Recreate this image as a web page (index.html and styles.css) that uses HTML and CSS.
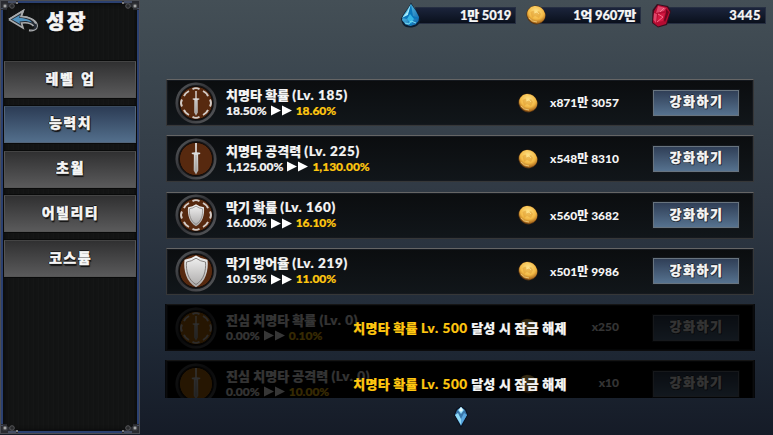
FILE: index.html
```html
<!DOCTYPE html>
<html lang="ko">
<head>
<meta charset="utf-8">
<title>성장</title>
<link rel="stylesheet" href="styles.css">
</head>
<body>
<svg class="defs" width="0" height="0" aria-hidden="true">
  <defs>
    <linearGradient id="ring" x1="0" y1="0" x2="1" y2="1"><stop offset="0" stop-color="#55585b"/><stop offset=".45" stop-color="#303135"/><stop offset="1" stop-color="#595b5e"/></linearGradient>
    <linearGradient id="silver" x1="0" y1="0" x2="0" y2="1"><stop offset="0" stop-color="#f4f4f4"/><stop offset="1" stop-color="#aaa8a7"/></linearGradient>
    <radialGradient id="gold" cx=".4" cy=".35" r=".65"><stop offset="0" stop-color="#ffe388"/><stop offset=".65" stop-color="#f3b945"/><stop offset="1" stop-color="#a9671b"/></radialGradient>
    <linearGradient id="blue" x1="0" y1="0" x2="1" y2="1"><stop offset="0" stop-color="#6ed9f5"/><stop offset="1" stop-color="#055ba5"/></linearGradient>
    <symbol id="disc" viewBox="0 0 42 42">
      <circle cx="21" cy="21" r="20.800" fill="#17181b"/>
      <circle cx="21" cy="21" r="19.200" fill="none" stroke="url(#ring)" stroke-width="2.600"/>
      <circle cx="21" cy="21" r="16.600" fill="currentColor" stroke="#110b08" stroke-width="1"/>
    </symbol>
    <symbol id="dashes" viewBox="0 0 42 42">
      <g fill="none" stroke="#d3cbc6" stroke-width="1.900">
        <path d="M17.500 7.200Q21 5 24.500 7.200M28 9Q32 11 33 14.200M35 17.500Q37 21 35 24.500M33 27.800Q31.800 31 28 33M24.500 34.800Q21 37 17.500 34.800M14 33Q10 31 9 27.800M7 24.500Q5 21 7 17.500M9 14.200Q10.200 11 14 9"/>
      </g>
    </symbol>
    <symbol id="sword" viewBox="0 0 42 42">
      <path d="M20.200 5h1.600v9.200l3.400.5v1.200l-2.100.7.200 16-2.300 4-2.300-4 .2-16-2.100-.7v-1.200l3.400-.5z" fill="url(#silver)"/>
      <path d="M21 17v16" stroke="#8f8985" stroke-width=".6"/>
    </symbol>
    <symbol id="shield" viewBox="0 0 42 42">
      <path d="M21 5.500Q26 9 32.500 9.700C33.800 20.500 30.500 32 21 37.300 11.500 32 8.200 20.500 9.500 9.700Q16 9 21 5.500z" fill="url(#silver)"/>
      <path d="M21 8.200Q25.500 11.400 30.500 12C31.200 21 28.800 30 21 34.500 13.200 30 10.800 21 11.500 12Q16.500 11.400 21 8.200z" fill="none" stroke="#6c6663" stroke-width=".8"/>
    </symbol>
    <symbol id="coin" viewBox="0 0 20 20">
      <ellipse cx="10" cy="10" rx="9.800" ry="9.200" transform="rotate(35 10 10)" fill="#593713"/>
      <ellipse cx="10" cy="9.700" rx="9.300" ry="8.600" transform="rotate(35 10 10)" fill="url(#gold)"/>
      <path d="M4.500 7l3-1.500L9 8l4-2 2 3-2 4-4-2-3 2z" fill="#d88e24" opacity=".4"/>
      <path d="M8 8l3-1 2 2M3 13q3 4 8 4" fill="none" stroke="#ffe89b" stroke-width=".8" opacity=".8"/>
    </symbol>
    <symbol id="corner" viewBox="0 0 18 10">
      <path d="M0 0h17v3h-5v3H6v3H0z" fill="#292a30"/>
      <path d="M7 1h8M1 8V7" stroke="#637298" stroke-width="1"/>
      <circle cx="4" cy="5" r="2.600" fill="#66676a" stroke="#303135"/><circle cx="4" cy="5" r="1" fill="#bbb"/>
      <circle cx="11" cy="5" r="2.300" fill="#292a2c" stroke="#555659"/>
      <path d="M15 2h2M16 1v2" stroke="#999" stroke-width="1"/>
    </symbol>
  </defs>
</svg>
<div class="screen">
  <aside class="sidebar">
    <svg class="corner tl"><use href="#corner"/></svg><svg class="corner tr"><use href="#corner"/></svg>
    <svg class="corner bl"><use href="#corner"/></svg><svg class="corner br"><use href="#corner"/></svg>
    <header class="heading">
      <svg class="back" viewBox="0 0 32 24"><path d="M2 10.500L16 2l-2 5.500C23 8 30 12 30 17c0 3-4 5-8 4.300" fill="none" stroke="#a9abad" stroke-width="2"/><path d="M2 10.500L16 19l-1.500-5C22 13 28 16 27 19q-1 2-5 2.300 8 0 8-4.300C30 12 23 8 14 7.500L16 2z" fill="#252b34"/><path d="M2 10.500L16 2l-2 5.500C21 8 27 10.500 29 14.500M2 10.500L16 19l-1.500-5c5-.7 10 .5 12 3" fill="none" stroke="#a9abad" stroke-width="1.700"/><path d="M5 10.500l8-4.500-.8 3C18 9 23 10.500 25 13.500c-4-1.800-8-2-12.500-1l.7 2.500z" fill="#4f91bd"/></svg>
      <h1>성장</h1>
    </header>
    <nav class="menu">
      <button class="tab">레벨 업</button>
      <button class="tab active">능력치</button>
      <button class="tab">초월</button>
      <button class="tab">어빌리티</button>
      <button class="tab">코스튬</button>
    </nav>
  </aside>
  <main class="main">
    <div class="wallet">
      <div class="balance"><svg class="gem" viewBox="0 0 24 26"><path d="M12 .5C14 5 21 12 21.500 18 20 23.500 17 25.500 11 25.500S3 22 2 17C4 11 10 6 12 .5z" fill="#0c1e32"/><path d="M12 2l5 7 3 6-.5 4-3 3.500-5 1.500-5-1.500L3 18l1-4 4-6z" fill="url(#blue)"/><path d="M12 2L9 13l-6 3 5-6z" fill="#a3e9fa"/><path d="M12 2l2 12 6 2-5 1-3 7-4-7-5-1 6-3z" fill="#0a77bb"/><path d="M8 17l3-5 4 5-3 5z" fill="#35b4e4"/><path d="M6 21l4 1 2-3 5 2" fill="none" stroke="#76dcf3" stroke-width="1"/></svg>1만 5019</div>
      <div class="balance"><svg class="gem cash"><use href="#coin"/></svg>1억 9607만</div>
      <div class="balance"><svg class="gem" viewBox="0 0 24 26"><path d="M8 2l11 2 3 5-4 14-9 2.500-6-4.500L3.500 8z" fill="#35101f"/><path d="M9 3l9 2 3 5-4 12-8 2.500-5-4L5 9z" fill="#b50c32"/><path d="M9 4l8 2-2 3-8 2zM8 12l-1 9-2.500-3L5 11z" fill="#e0456a"/><path d="M9 12l7-1-2 8-6 1z" fill="#d51942"/><path d="M17 7l3 3-4 10-1-2 2-7z" fill="#71051f"/><path d="M9 12l5 3-6 5M15 6l-4 4" fill="none" stroke="#ff849b" stroke-width=".8"/></svg>3445</div>
    </div>
    <section class="list">
      <article class="row">
        <svg class="skill"><use href="#disc"/><use href="#dashes"/><use href="#sword" x="4.500" y="5" width="33" height="33"/></svg>
        <div class="info"><h2>치명타 확률 <span class="level">(Lv. 185)</span></h2><p>18.50% <svg class="arrows" viewBox="0 0 21 10"><path d="M0 0l10 5-10 5zM11 0l10 5-10 5z"/></svg> <b>18.60%</b></p></div>
        <svg class="coin"><use href="#coin"/></svg><span class="cost">x871만 3057</span><button class="upgrade">강화하기</button>
      </article>
      <article class="row">
        <svg class="skill"><use href="#disc"/><use href="#sword"/></svg>
        <div class="info"><h2>치명타 공격력 <span class="level">(Lv. 225)</span></h2><p>1,125.00% <svg class="arrows" viewBox="0 0 21 10"><path d="M0 0l10 5-10 5zM11 0l10 5-10 5z"/></svg> <b>1,130.00%</b></p></div>
        <svg class="coin"><use href="#coin"/></svg><span class="cost">x548만 8310</span><button class="upgrade">강화하기</button>
      </article>
      <article class="row">
        <svg class="skill"><use href="#disc"/><use href="#dashes"/><use href="#shield" x="6.500" y="6.500" width="29" height="29"/></svg>
        <div class="info"><h2>막기 확률 <span class="level">(Lv. 160)</span></h2><p>16.00% <svg class="arrows" viewBox="0 0 21 10"><path d="M0 0l10 5-10 5zM11 0l10 5-10 5z"/></svg> <b>16.10%</b></p></div>
        <svg class="coin"><use href="#coin"/></svg><span class="cost">x560만 3682</span><button class="upgrade">강화하기</button>
      </article>
      <article class="row">
        <svg class="skill"><use href="#disc"/><use href="#shield"/></svg>
        <div class="info"><h2>막기 방어율 <span class="level">(Lv. 219)</span></h2><p>10.95% <svg class="arrows" viewBox="0 0 21 10"><path d="M0 0l10 5-10 5zM11 0l10 5-10 5z"/></svg> <b>11.00%</b></p></div>
        <svg class="coin"><use href="#coin"/></svg><span class="cost">x501만 9986</span><button class="upgrade">강화하기</button>
      </article>
      <article class="row locked">
        <svg class="skill amber"><use href="#disc"/><use href="#dashes"/><use href="#sword" x="4.500" y="5" width="33" height="33"/></svg>
        <div class="info"><h2>진심 치명타 확률 <span class="level">(Lv. 0)</span></h2><p>0.00% <svg class="arrows" viewBox="0 0 21 10"><path d="M0 0l10 5-10 5zM11 0l10 5-10 5z"/></svg> <b>0.10%</b></p></div>
        <svg class="coin"><use href="#coin"/></svg><span class="cost">x250</span><button class="upgrade">강화하기</button>
        <div class="lock"><span><em>치명타 확률 <span class="level">Lv. 500</span></em> 달성 시 잠금 해제</span></div>
      </article>
      <article class="row locked">
        <svg class="skill amber"><use href="#disc"/><use href="#sword"/></svg>
        <div class="info"><h2>진심 치명타 공격력 <span class="level">(Lv. 0)</span></h2><p>0.00% <svg class="arrows" viewBox="0 0 21 10"><path d="M0 0l10 5-10 5zM11 0l10 5-10 5z"/></svg> <b>10.00%</b></p></div>
        <svg class="coin"><use href="#coin"/></svg><span class="cost">x10</span><button class="upgrade">강화하기</button>
        <div class="lock"><span><em>치명타 확률 <span class="level">Lv. 500</span></em> 달성 시 잠금 해제</span></div>
      </article>
    </section>
    <svg class="more" viewBox="0 0 16 24"><path d="M8 1l5 3 2 6-7 13L1 10l2-6z" fill="#0b1220"/><path d="M8 2l4 3 2 5-6 11L2 10l2-5z" fill="#3976aa"/><path d="M8 2l3 3-3 4-3-4zM2 10l3-2 3 6v6z" fill="#8fdaf8"/><path d="M14 10l-3-2-3 6v6z" fill="#5aa7df"/><path d="M8 2l2 3-2 2-2-2z" fill="#e1faff"/></svg>
  </main>
</div>
</body>
</html>
```
FILE: styles.css
```css
* { box-sizing: border-box; }
body { margin: 0; font-family: Lato, "Noto Sans CJK KR", sans-serif; color: #f5f5f5; }
.defs { position: absolute; }
h1, h2, p { margin: 0; }
button { padding: 0; font: inherit; color: inherit; }
.screen { display: flex; width: 773px; height: 435px; overflow: hidden; background: linear-gradient(#444f56 0, #3b464f 18%, #303944 45%, #202a37 76%, #151b27 100%); }
.sidebar { position: relative; width: 140px; height: 434px; padding: 0 3px; border: 1px solid #4b4d53; background: repeating-linear-gradient(90deg, #131414 0 2px, #151616 2px 3px, #121313 3px 5px); box-shadow: inset 0 0 0 2px #2b4070, inset 0 0 4px 3px #08090a; }
.corner { position: absolute; width: 18px; height: 10px; }
.tl { left: 0; top: 0; }
.tr { right: 0; top: 0; transform: scaleX(-1); }
.bl { left: 0; bottom: 0; transform: scaleY(-1); }
.br { right: 0; bottom: 0; transform: scale(-1); }
.heading { display: flex; height: 60px; padding: 8px 0 0 3px; gap: 7px; }
.back { width: 32px; height: 24px; }
h1 { font-size: 20px; line-height: 24px; font-weight: 900; letter-spacing: 2.500px; -webkit-text-stroke: .6px #f5f5f5; text-shadow: 0 1px 2px #000; }
.menu { display: grid; gap: 7.750px; }
.tab { width: 132px; height: 37px; border: 1px solid #555; border-top-color: #444; outline: 1px solid #090a0a; background: linear-gradient(#303031, #5a5a5b); font-size: 14px; font-weight: 900; letter-spacing: 1.500px; word-spacing: 2px; line-height: 32px; padding: 0 0 2px 1px; -webkit-text-stroke: .4px #f5f5f5; text-shadow: -1px 0 #181818, 1px 0 #181818, 0 1px #181818, 0 -1px #181818, 1px 2px 1px #111; }
.tab.active { background: linear-gradient(#2c3c55, #536f8c); border-color: #53657a; border-top-color: #3b4b5e; }
.main { flex: 1; display: flex; flex-direction: column; }
.wallet { display: flex; justify-content: flex-end; gap: 24px; padding: 7px 7px 0 0; height: 79px; }
.balance { position: relative; width: 101px; height: 17px; padding-right: 4px; border: 1px solid #262f42; background: linear-gradient(#1b243b, #0a101c); font-size: 13px; line-height: 15px; font-weight: 900; text-align: right; letter-spacing: -.25px; -webkit-text-stroke: .2px #f5f5f5; }
.balance:last-child { letter-spacing: .4px; }
.gem { position: absolute; left: -17px; top: -6px; width: 24px; height: 26px; }
.gem.cash { left: -15px; top: -3px; width: 20px; height: 20px; }
.list { display: grid; grid-auto-rows: 47px; gap: 9.300px; height: 319px; margin: 0 18px 0 25px; padding: 0 1px; overflow: hidden; align-content: start; }
.row { position: relative; display: grid; grid-template-columns: 42px 301px 20px 81px 86px; align-items: center; padding-left: 8px; border: 1px solid #363738; border-top-color: #656565; outline: 1px solid #15191f; outline-offset: -2px; background: linear-gradient(#0b0d0f, #11161a); }
.skill { width: 42px; height: 42px; color: #57290f; }
.skill.amber { color: #b46b0c; }
.info { padding: 0 0 0 9px; white-space: nowrap; font-size: 12px; font-weight: 900; -webkit-text-stroke: .2px currentColor; }
h2 { font-size: 13px; line-height: 16px; font-weight: 900; letter-spacing: .05px; }
.level { letter-spacing: .6px; font-size: 13.500px; }
.info p { display: flex; align-items: center; gap: 4px; line-height: 16px; letter-spacing: 0; }
.arrows { width: 21px; height: 11px; fill: #fff; }
b, em { color: #ffc710; font-style: normal; font-weight: 900; }
.coin { width: 20px; height: 20px; }
.cost { font-size: 12px; font-weight: 900; text-align: right; letter-spacing: 0; padding-bottom: 2px; }
.upgrade { width: 86px; height: 26px; margin-left: 34px; border: 1px solid #68747f; outline: 1px solid #14181d; background: linear-gradient(#303f57, #56728f); font-size: 13px; font-weight: 900; letter-spacing: 1.500px; line-height: 21px; padding: 0 0 2px 1px; -webkit-text-stroke: .3px #f5f5f5; text-shadow: -1px 0 #202733, 1px 0 #202733, 0 1px #202733, 0 -1px #202733, 1px 1px #202733; }
.locked { background: #000; }
.lock { position: absolute; inset: -1px -2px; display: flex; align-items: center; justify-content: center; background: rgba(0, 0, 0, .79); font-size: 13px; line-height: 16px; font-weight: 900; letter-spacing: .25px; white-space: nowrap; padding-top: 1px; -webkit-text-stroke: .2px currentColor; }
.more { width: 16px; height: 24px; margin: 7px 0 0 313px; }
```
